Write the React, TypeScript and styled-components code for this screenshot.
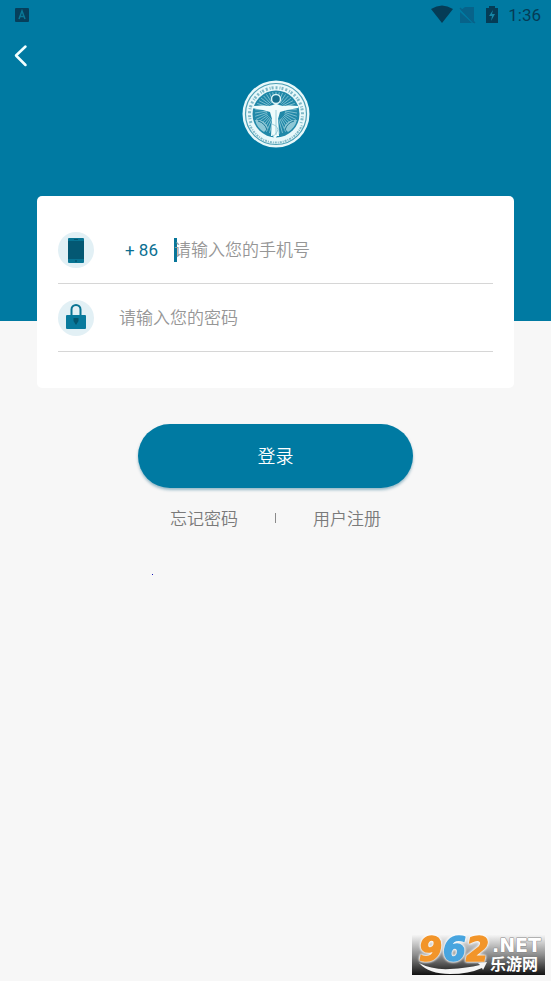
import React from "react";
import styled, { createGlobalStyle } from "styled-components";

const teal = "#007aa2";
const cjk = '"Noto Sans CJK SC", sans-serif';

const GlobalStyle = createGlobalStyle`
  * { box-sizing: border-box; }
  body {
    margin: 0;
    background: #f7f7f7;
    font-family: Roboto, ${cjk};
  }
`;

const Page = styled.div`
  position: relative;
  min-height: 100vh;
`;

const Header = styled.header`
  height: 321px;
  background: ${teal};
`;

const StatusBar = styled.div`
  display: flex;
  align-items: center;
  justify-content: space-between;
  height: 30px;
  padding: 0 10px 0 15px;
  color: #053c56;
`;

const StatusGroup = styled.div`
  display: flex;
  align-items: center;
  gap: 9px;
`;

const Clock = styled.time`
  font-size: 17px;
  line-height: 20px;
`;

const BackButton = styled.button`
  display: block;
  width: 42px;
  height: 50px;
  padding: 0;
  border: 0;
  background: none;
  svg { display: block; }
`;

const Logo = styled.svg`
  display: block;
  width: 68px;
  height: 68px;
  margin: 0 auto;
`;

const Form = styled.form`
  margin-top: -125px;
`;

const Card = styled.div`
  margin: 0 37px;
  padding: 20px 21px 36px;
  border-radius: 5px;
  background: #fff;
`;

const Field = styled.label`
  display: flex;
  align-items: center;
  height: 68px;
  border-bottom: 1px solid #d6d6d6;
`;

const Badge = styled.span`
  flex: none;
  width: 36px;
  height: 36px;
  margin-right: 25px;
  border-radius: 50%;
  background: #e2f0f5;
  svg { display: block; }
`;

const CountryCode = styled.span`
  flex: none;
  width: 55px;
  padding-left: 6px;
  color: #0b6f91;
  font-size: 17px;
`;

const Caret = styled.span`
  flex: none;
  width: 3px;
  height: 24px;
  margin-right: -3px;
  background: #08769a;
`;

const Input = styled.input`
  flex: 1;
  min-width: 0;
  height: 32px;
  padding: 0 0 2px;
  border: 0;
  outline: 0;
  background: none;
  color: #333;
  font-family: ${cjk};
  font-size: 17px;
  font-weight: 350;
  &::placeholder { color: #969696; opacity: 1; }
`;

const LoginButton = styled.button`
  display: block;
  width: 50%;
  height: 64px;
  margin: 36px auto 0;
  padding: 0 0 2px;
  border: 0;
  border-radius: 32px;
  background: ${teal};
  box-shadow: 0 2px 3px rgba(0, 90, 125, 0.4);
  color: #fff;
  font-family: ${cjk};
  font-size: 18px;
  font-weight: 350;
`;

const Links = styled.nav`
  display: flex;
  align-items: center;
  justify-content: center;
  gap: 37px;
  margin-top: 18px;
`;

const TextLink = styled.a`
  color: #7a7a7a;
  font-family: ${cjk};
  font-size: 17px;
  font-weight: 350;
  line-height: 24px;
  text-decoration: none;
`;

const Divider = styled.span`
  width: 1px;
  height: 10px;
  background: #8a8a8a;
`;

const Dot = styled.div`
  width: 1px;
  height: 1px;
  margin: 44px 0 0 152px;
  background: #1414b8;
`;

const Watermark = styled.svg`
  position: absolute;
  right: 6px;
  bottom: 6px;
  width: 133px;
  height: 40px;
  overflow: visible;
`;

const Digits = styled.g`
  filter: drop-shadow(0 0 1px #fff) drop-shadow(0 0 1px #fff);
`;

const rays = Array.from({ length: 40 }, (_, i) => {
  const a = (i * Math.PI) / 20;
  return {
    x1: 34 + 9 * Math.cos(a),
    y1: 31 + 9 * Math.sin(a),
    x2: 34 + 21 * Math.cos(a),
    y2: 33 + 21 * Math.sin(a),
  };
});

function Emblem() {
  return (
    <Logo viewBox="0 0 68 68" role="img" aria-label="校徽">
      <circle cx="34" cy="34" r="33.500" fill="#e8f8fa" />
      <circle cx="34" cy="34" r="30.500" fill="none" stroke="#4d9fb5" strokeWidth="1.200" />
      <path d="M9 43A26.500 26.500 0 1 1 59 43" fill="none" stroke="#7fb9c8" strokeWidth="3" strokeDasharray="2 2 1 1 2 2" />
      <path d="M8 45A28 28 0 0 0 60 45" fill="none" stroke="#7fb9c8" strokeWidth="2" strokeDasharray="1 1 2 1" />
      <circle cx="34" cy="34" r="23.500" fill="#2088a8" />
      <g stroke="#a3d4df" strokeWidth="0.700">
        {rays.map((r, i) => (
          <line key={i} {...r} />
        ))}
      </g>
      <path d="M13 40q10-1 13 8l-4 4q-7-4-9-12M55 40q-10-1-13 8l4 4q7-4 9-12" fill="#8fc8d6" />
      <path d="M16 41q7 2 9 9M52 41q-7 2-9 9" fill="none" stroke="#1b7896" />
      <circle cx="34" cy="19" r="4.500" fill="#146f8e" stroke="#d9f3f6" strokeWidth="1.500" />
      <path d="M12 26q8-1 15 0l4-1q3-2 6 0l4 1q7-1 15 0v2l-11 2-7 2-2 7 1 17h-2l-2 3-2-3h-2l1-17-2-7-7-2-12-2z" fill="#effcfc" />
      <path d="M34 30v25M30 44q8 3 5 8t-5 3" fill="none" stroke="#8cc4d3" strokeWidth="0.800" />
    </Logo>
  );
}

function StatusIcons() {
  return (
    <svg width="68" height="20" viewBox="0 0 68 20" aria-hidden="true">
      <path d="M0 4q11-7 22 0L11 18z" fill="currentColor" />
      <path d="M34 2h9v16h-1L30 5zM29 7l12 11H29z" fill="#07638a" />
      <path d="M29 3l15 15" stroke="#07638a" strokeWidth="1.500" />
      <path d="M58 1h6v2h3v15H55V3h3z" fill="currentColor" />
      <path d="M62 5l-4 6h3l-1 5 4-7h-3z" fill="#1685a5" />
    </svg>
  );
}

export default function App() {
  return (
    <Page>
      <GlobalStyle />
      <Header>
        <StatusBar>
          <svg width="14" height="14" viewBox="0 0 14 14" aria-hidden="true">
            <rect width="14" height="14" rx="1" fill="#063f5b" />
            <path d="M4 11l3-8 3 8M5 8.500h4" fill="none" stroke="#0a7897" strokeWidth="1.500" />
          </svg>
          <StatusGroup>
            <StatusIcons />
            <Clock>1:36</Clock>
          </StatusGroup>
        </StatusBar>
        <BackButton type="button" aria-label="返回">
          <svg width="42" height="50" viewBox="0 0 42 50">
            <path d="M25.500 16.500L16 25.500l9.500 9.500" fill="none" stroke="#f2ffff" strokeWidth="2.500" strokeLinecap="round" strokeLinejoin="round" />
          </svg>
        </BackButton>
        <Emblem />
      </Header>
      <Form onSubmit={(e: React.FormEvent) => e.preventDefault()}>
        <Card>
          <Field>
            <Badge>
              <svg width="36" height="36" viewBox="0 0 36 36" aria-hidden="true">
                <rect x="10" y="6" width="16" height="25" rx="1" fill="#087493" />
                <path d="M10 9h16v18H10z" fill="#045873" />
                <circle cx="18" cy="29" r="1" fill="#04566f" />
                <path d="M16 7.500h4" stroke="#04566f" />
              </svg>
            </Badge>
            <CountryCode>+ 86</CountryCode>
            <Caret />
            <Input type="tel" placeholder="请输入您的手机号" aria-label="手机号" />
          </Field>
          <Field>
            <Badge>
              <svg width="36" height="36" viewBox="0 0 36 36" aria-hidden="true">
                <path d="M13.500 16V9.500a4.500 4.500 0 0 1 9 0V16" fill="none" stroke="#087493" strokeWidth="2" />
                <rect x="8" y="15" width="20" height="14" rx="1" fill="#087a9d" />
                <path d="M15.500 18h5v3L18 25l-2.500-4z" fill="#04566f" />
              </svg>
            </Badge>
            <Input type="password" placeholder="请输入您的密码" aria-label="密码" />
          </Field>
        </Card>
        <LoginButton type="submit">登录</LoginButton>
      </Form>
      <Links>
        <TextLink href="#forgot">忘记密码</TextLink>
        <Divider />
        <TextLink href="#register">用户注册</TextLink>
      </Links>
      <Dot />
      <Watermark viewBox="0 0 133 40" role="img" aria-label="962.NET 乐游网">
        <defs>
          <linearGradient id="shade" x1="0" y1="0" x2="0" y2="1">
            <stop offset="0" stopColor="#f5f5f5" />
            <stop offset="0.500" stopColor="#8d8d8d" />
            <stop offset="1" stopColor="#111" />
          </linearGradient>
        </defs>
        <rect width="133" height="40" fill="url(#shade)" />
        <g fontFamily="DejaVu Sans" fontWeight="bold" strokeLinejoin="round">
          <Digits fontSize="33" fontStyle="italic" strokeWidth="1.500">
            <text x="7" y="26" fill="#f2952a" stroke="#f2952a">9</text>
            <text x="31" y="26" fill="#48a5df" stroke="#48a5df">6</text>
            <text x="54" y="26" fill="#f2952a" stroke="#f2952a">2</text>
          </Digits>
          <text x="80" y="17" fontSize="19" fill="#fff" paintOrder="stroke" stroke="#888" strokeWidth="1">.NET</text>
        </g>
        <path d="M7 28q13 7 31 6 17-1 30-4l-2-2 9-1-4 8-1-2q-13 6-32 6-21 0-31-11z" fill="#f5f5f5" />
        <text x="78" y="35" fontFamily="Noto Sans CJK SC" fontWeight="bold" fontSize="16" fill="#fff">乐游网</text>
      </Watermark>
    </Page>
  );
}
